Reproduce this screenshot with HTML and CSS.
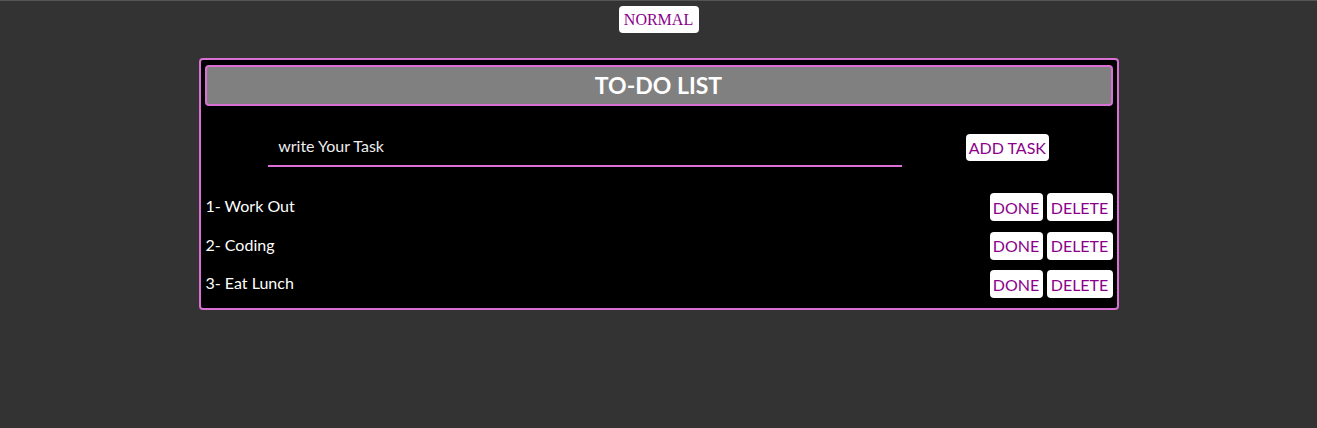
FILE: index.html
```html
<!DOCTYPE html>
<html>
<head>
<meta charset="utf-8">
<link rel="stylesheet" href="styles.css">
</head>
<body>
<div class="top">
  <button class="mode">NORMAL</button>
</div>
<div class="todo">
  <h1 class="title">TO-DO LIST</h1>
  <div class="add-row">
    <input class="task-input" type="text" value="write Your Task">
    <button class="btn">ADD TASK</button>
  </div>
  <ul class="list">
    <li class="item"><span class="label">1- Work Out</span><span class="actions"><button class="btn">DONE</button><button class="btn">DELETE</button></span></li>
    <li class="item"><span class="label">2- Coding</span><span class="actions"><button class="btn">DONE</button><button class="btn">DELETE</button></span></li>
    <li class="item"><span class="label">3- Eat Lunch</span><span class="actions"><button class="btn">DONE</button><button class="btn">DELETE</button></span></li>
  </ul>
</div>
</body>
</html>
```
FILE: styles.css
```css
html, body {
  margin: 0;
  padding: 0;
}
body {
  background: #333333;
  border-top: 1px solid #555555;
  height: 427px;
  font-family: Lato, "Noto Sans", sans-serif;
  font-size: 16px;
}
.top {
  display: flex;
  justify-content: center;
  padding-top: 5px;
}
.mode {
  font-family: "Liberation Serif", serif;
  font-size: 16px;
  color: #8b008b;
  background: #fff;
  border: none;
  border-radius: 4px;
  height: 27px;
  width: 80px;
  padding: 0;
}
.todo {
  width: 920px;
  box-sizing: border-box;
  margin: 25px auto 0;
  background: #000;
  border: 2px solid #da70d6;
  border-radius: 4px;
  padding: 5px 4px 10px 4px;
}
.title {
  margin: 0;
  height: 41px;
  box-sizing: border-box;
  background: #808080;
  border: 2px solid #da70d6;
  border-radius: 4px;
  color: #fff;
  font-size: 23px;
  font-weight: bold;
  text-align: center;
  line-height: 37px;
}
.add-row {
  display: flex;
  justify-content: space-evenly;
  align-items: center;
  padding: 21px 0 0;
}
.task-input {
  width: 634px;
  height: 40px;
  box-sizing: border-box;
  background: transparent;
  border: none;
  border-bottom: 2px solid #da70d6;
  color: #eeeeee;
  font-family: Lato, "Noto Sans", sans-serif;
  font-size: 16px;
  padding: 0 10px 2px;
  outline: none;
}
.btn {
  font-family: Lato, "Noto Sans", sans-serif;
  font-size: 16px;
  color: #8b008b;
  background: #fff;
  border: none;
  border-radius: 4px;
  height: 27px;
  padding: 0 6px;
}
.add-row .btn {
  width: 83px;
  padding: 0;
}
.list {
  list-style: none;
  margin: 26px 0 0;
  padding: 0;
  display: flex;
  flex-direction: column;
  gap: 10.5px;
}
.item {
  display: flex;
  justify-content: space-between;
  align-items: center;
  height: 28px;
  color: #fff;
  padding-left: 1px;
}
.label {
  margin-bottom: 3px;
}
.actions {
  display: flex;
  gap: 4px;
}
.actions .btn {
  height: 28px;
}
.actions .btn:first-child {
  width: 53px;
  padding: 0;
}
.actions .btn:last-child {
  width: 66px;
  padding: 0;
}
```
